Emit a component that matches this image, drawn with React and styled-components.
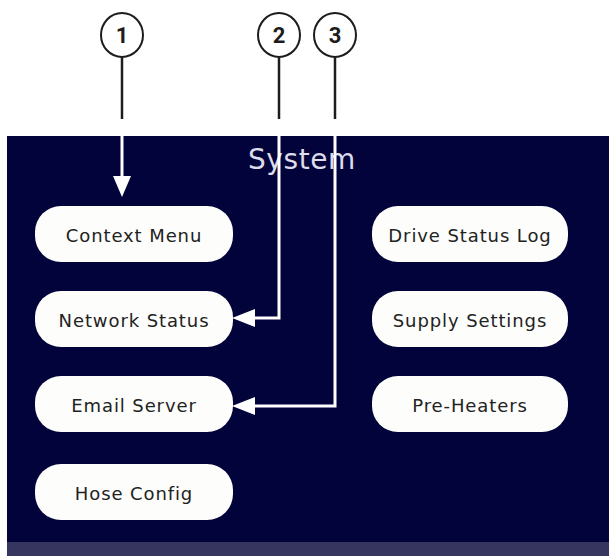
import React from "react";
import styled, { createGlobalStyle } from "styled-components";

const GlobalStyle = createGlobalStyle`
  html, body {
    margin: 0;
    padding: 0;
    background: #ffffff;
  }
  body {
    font-family: "DejaVu Sans", "Noto Sans", sans-serif;
  }
`;

const leftItems = ["Context Menu", "Network Status", "Email Server", "Hose Config"];
const rightItems = ["Drive Status Log", "Supply Settings", "Pre-Heaters"];

const callouts = [
  { n: 1, x: 122 },
  { n: 2, x: 279 },
  { n: 3, x: 335 },
];

function Callouts() {
  return (
    <Overlay width="609" height="556" viewBox="0 0 609 556">
      {callouts.map((c) => (
        <g key={c.n}>
          <ellipse cx={c.x} cy={35} rx={21} ry={22} fill="#fff" stroke="#1d1d1d" strokeWidth="2" />
          <text
            x={c.x}
            y={43}
            textAnchor="middle"
            fontFamily="Roboto, 'Liberation Sans', sans-serif"
            fontWeight="700"
            fontSize="22"
            fill="#1d1d1d"
          >
            {c.n}
          </text>
          <line x1={c.x} y1={57} x2={c.x} y2={119} stroke="#1d1d1d" strokeWidth="2.5" />
        </g>
      ))}
      <g stroke="#fff" strokeWidth="3" fill="none">
        <polyline points="122,136 122,178" />
        <polyline points="279,136 279,318 252,318" />
        <polyline points="335,136 335,406 252,406" />
      </g>
      <g fill="#fff">
        <polygon points="113,176 131,176 122,197" />
        <polygon points="232,318 255,309 255,327" />
        <polygon points="232,406 255,397 255,415" />
      </g>
    </Overlay>
  );
}

export default function App() {
  return (
    <Page>
      <GlobalStyle />
      <Panel>
        <Title>System</Title>
        <Grid>
          <Column>
            {leftItems.map((label) => (
              <MenuButton key={label}>{label}</MenuButton>
            ))}
          </Column>
          <Column>
            {rightItems.map((label) => (
              <MenuButton key={label}>{label}</MenuButton>
            ))}
          </Column>
        </Grid>
      </Panel>
      <Footer />
      <Callouts />
    </Page>
  );
}

const Page = styled.div`
  position: relative;
  width: 609px;
  height: 556px;
  padding-top: 136px;
  padding-left: 7px;
  box-sizing: border-box;
  display: flex;
  flex-direction: column;
  overflow: hidden;
`;

const Panel = styled.div`
  flex: 1;
  background: #03033b;
  display: flex;
  flex-direction: column;
`;

const Title = styled.div`
  text-align: center;
  color: #dcdcea;
  font-size: 28px;
  line-height: 32px;
  margin-top: 8px;
  padding-right: 12px;
  letter-spacing: 0.6px;
`;

const Grid = styled.div`
  display: grid;
  grid-template-columns: 198px 196px;
  column-gap: 139px;
  padding-left: 28px;
  margin-top: 30px;
`;

const Column = styled.div`
  display: flex;
  flex-direction: column;
  gap: 29px;

  & > :nth-child(4) {
    margin-top: 3px;
  }
`;

const MenuButton = styled.div`
  height: 56px;
  box-sizing: border-box;
  padding-top: 3px;
  border-radius: 26px;
  background: #fdfdfb;
  display: flex;
  align-items: center;
  justify-content: center;
  color: #222;
  font-size: 18px;
  letter-spacing: 0.9px;
  white-space: nowrap;
`;

const Footer = styled.div`
  height: 14px;
  background: #363560;
`;

const Overlay = styled.svg`
  position: absolute;
  top: 0;
  left: 0;
  pointer-events: none;
`;
